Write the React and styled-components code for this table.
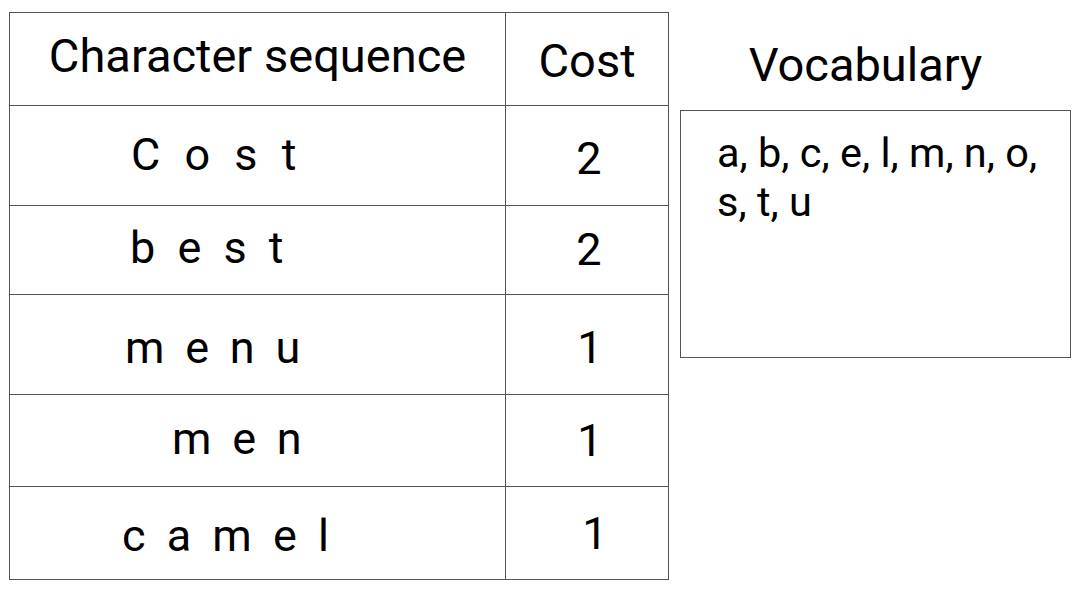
import styled, { createGlobalStyle } from "styled-components";

const GlobalStyle = createGlobalStyle`
  html, body {
    margin: 0;
    padding: 0;
    background: #ffffff;
  }
  body {
    font-family: Roboto, "Liberation Sans", sans-serif;
    color: #000;
  }
`;

const Page = styled.div`
  display: flex;
  align-items: flex-start;
  gap: 11px;
  padding: 12px 0 0 9px;
  width: 1080px;
  height: 592px;
  box-sizing: border-box;
`;

const Table = styled.div`
  display: grid;
  grid-template-columns: 496px 163px;
  border-top: 1px solid #555;
  border-left: 1px solid #555;
`;

// $dy nudges the text down (positive) or up (negative) inside its cell
const Cell = styled.div`
  display: flex;
  align-items: center;
  justify-content: ${(p) => (p.$center ? "center" : "flex-start")};
  box-sizing: border-box;
  height: ${(p) => p.$h}px;
  border-right: 1px solid #555;
  border-bottom: 1px solid #555;
  padding-left: ${(p) => p.$left || 0}px;
  padding-top: ${(p) => Math.max(p.$dy || 0, 0)}px;
  padding-bottom: ${(p) => Math.max(-(p.$dy || 0), 0)}px;
  font-size: ${(p) => (p.$head ? 47 : 45)}px;
  letter-spacing: ${(p) => (p.$ls ? `${p.$ls}px` : "0")};
  white-space: pre;
`;

const Side = styled.div`
  display: flex;
  flex-direction: column;
  width: 391px;
`;

const Title = styled.div`
  font-size: 47px;
  height: 98px;
  display: flex;
  align-items: center;
  justify-content: center;
  padding-right: 20px;
  padding-top: 6px;
  box-sizing: border-box;
`;

const VocabBox = styled.div`
  box-sizing: border-box;
  height: 248px;
  border: 1px solid #555;
  padding: 17px 16px 0 36px;
  font-size: 41.5px;
  line-height: 49px;
`;

const rows = [
  { seq: "C o s t", cost: "2", h: 100, left: 121, ls: 6.5, dy: -3, cdy: 5, cshift: 4 },
  { seq: "b e s t", cost: "2", h: 89, left: 120, ls: 5.5, dy: -6, cdy: -1, cshift: 4 },
  { seq: "m e n u", cost: "1", h: 100, left: 115, ls: 4.8, dy: 5, cdy: 5, cshift: 6 },
  { seq: "m e n", cost: "1", h: 92, left: 162, ls: 4.8, dy: -5, cdy: 0, cshift: 6 },
  { seq: "c a m e l", cost: "1", h: 93, left: 112, ls: 5, dy: 4, cdy: 0, cshift: 16 },
];

export default function App() {
  return (
    <>
      <GlobalStyle />
      <Page>
        <Table>
          <Cell $h={93} $center $head $dy={-8}>
            Character sequence
          </Cell>
          <Cell $h={93} $center $head $dy={3}>
            Cost
          </Cell>
          {rows.map((r) => [
            <Cell key={r.seq} $h={r.h} $left={r.left} $dy={r.dy} $ls={r.ls}>
              {r.seq}
            </Cell>,
            <Cell key={r.seq + "-cost"} $h={r.h} $center $left={r.cshift} $dy={r.cdy}>
              {r.cost}
            </Cell>,
          ])}
        </Table>
        <Side>
          <Title>Vocabulary</Title>
          <VocabBox>a, b, c, e, l, m, n, o, s, t, u</VocabBox>
        </Side>
      </Page>
    </>
  );
}
